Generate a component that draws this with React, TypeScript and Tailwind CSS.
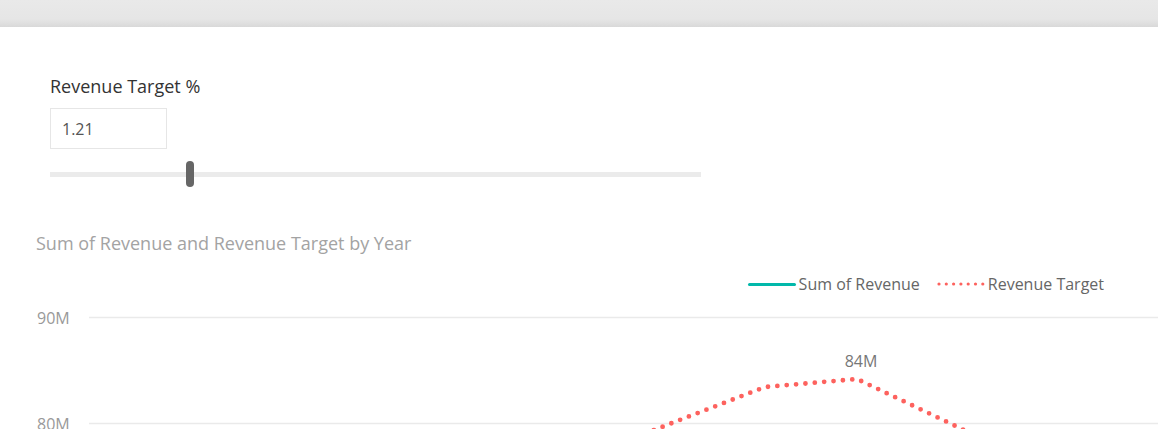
import React from 'react'

const targetPoints = [
  [610, 152],
  [765, 92],
  [857, 84],
  [985, 145],
]

export default function App() {
  const path = targetPoints.map((p) => p.join(',')).join(' ')

  return (
    <div className="w-[1158px] h-[429px] overflow-hidden bg-white font-['Open_Sans','Noto_Sans',sans-serif]">
      {/* window chrome */}
      <div className="h-[27px] bg-[linear-gradient(to_bottom,#e9e9e9_0%,#e6e6e6_70%,#d9d9d9_100%)]" />

      {/* slicer */}
      <div className="pl-[50px] pt-[47px]">
        <div className="text-[18px] leading-[24px] text-[#333]">Revenue Target %</div>
        <div className="mt-[10px] w-[117px] h-[41px] border border-[#e6e6e6] flex items-center pl-[11px] text-[16px] text-[#555]">
          1.21
        </div>
        <div className="relative mt-[12px] w-[651px] h-[26px] flex items-center">
          <div className="w-full h-[5px] bg-[#ebebeb]" />
          <div className="absolute left-[136px] top-0 w-[8px] h-[26px] rounded-[4px] bg-[#666]" />
        </div>
      </div>

      {/* chart */}
      <div className="mt-[44px]">
        <div className="pl-[36px] text-[18px] leading-[24px] text-[#a3a3a3]">Sum of Revenue and Revenue Target by Year</div>
        <div className="mt-[18px] pr-[54px] flex justify-end items-center h-[22px] text-[16px] text-[#666]">
          <div className="flex items-center gap-[3px]">
            <span className="w-[48px] h-[3px] rounded-full bg-[#01b8aa]" />
            <span>Sum of Revenue</span>
          </div>
          <div className="ml-[17px] flex items-center gap-[3px]">
            <svg width="48" height="4" className="block">
              <line x1="2" y1="2" x2="46" y2="2" stroke="#fd625e" strokeWidth="3.2" strokeLinecap="round" strokeDasharray="0 7.3" />
            </svg>
            <span>Revenue Target</span>
          </div>
        </div>
        <svg width="1158" height="140" className="block">
          <line x1="89" y1="22.5" x2="1158" y2="22.5" stroke="#eaeaea" strokeWidth="1.5" />
          <line x1="89" y1="128.5" x2="1158" y2="128.5" stroke="#eaeaea" strokeWidth="1.5" />
          <text x="37" y="29" fontSize="16" fill="#999">90M</text>
          <text x="37" y="135" fontSize="16" fill="#999">80M</text>
          <polyline points={path} fill="none" stroke="#fd625e" strokeWidth="4.8" strokeLinecap="round" strokeLinejoin="round" strokeDasharray="0 9.4" />
          <text x="861" y="72" fontSize="16" fill="#777" textAnchor="middle">84M</text>
        </svg>
      </div>
    </div>
  )
}
